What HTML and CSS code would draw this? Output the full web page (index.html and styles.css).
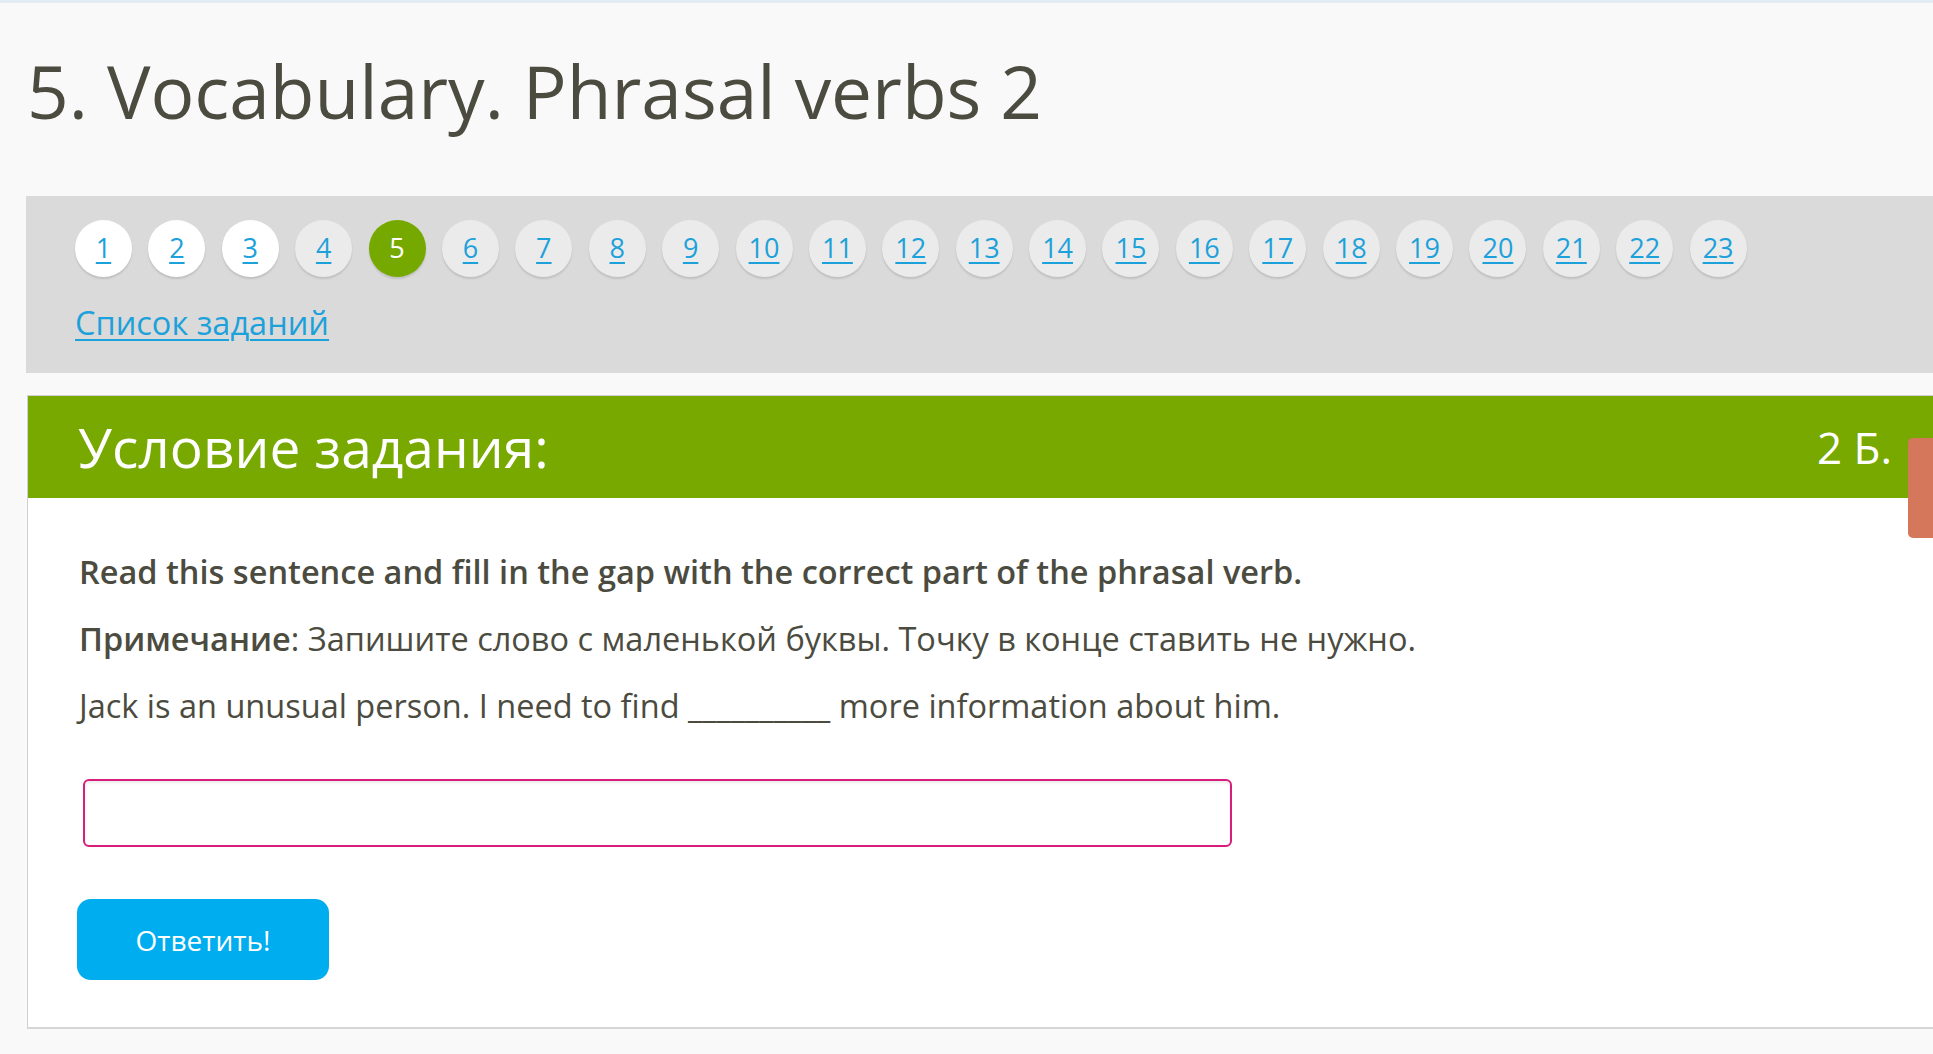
FILE: index.html
```html
<!DOCTYPE html>
<html lang="ru">
<head>
    <meta charset="UTF-8">
    <meta name="viewport" content="width=device-width, initial-scale=1.0">
    <title>5. Vocabulary. Phrasal verbs 2</title>
    <link rel="stylesheet" href="styles.css">
</head>
<body>
    <div class="page">
        <h1>5. Vocabulary. Phrasal verbs 2</h1>

        <div class="task-nav">
            <div class="steps">
                <a class="step done" href="#">1</a>
                <a class="step done" href="#">2</a>
                <a class="step done" href="#">3</a>
                <a class="step" href="#">4</a>
                <span class="step current">5</span>
                <a class="step" href="#">6</a>
                <a class="step" href="#">7</a>
                <a class="step" href="#">8</a>
                <a class="step" href="#">9</a>
                <a class="step" href="#">10</a>
                <a class="step" href="#">11</a>
                <a class="step" href="#">12</a>
                <a class="step" href="#">13</a>
                <a class="step" href="#">14</a>
                <a class="step" href="#">15</a>
                <a class="step" href="#">16</a>
                <a class="step" href="#">17</a>
                <a class="step" href="#">18</a>
                <a class="step" href="#">19</a>
                <a class="step" href="#">20</a>
                <a class="step" href="#">21</a>
                <a class="step" href="#">22</a>
                <a class="step" href="#">23</a>
            </div>
            <a class="task-list" href="#">Список заданий</a>
        </div>

        <div class="task">
            <div class="task-head">
                <span class="task-title">Условие задания:</span>
                <span class="task-score">2 Б.</span>
            </div>
            <div class="task-body">
                <p class="lead">Read this sentence and fill in the gap with the correct part of the phrasal verb.</p>
                <p><b>Примечание</b>: Запишите слово с маленькой буквы. Точку в конце ставить не нужно.</p>
                <p>Jack is an unusual person. I need to find __________ more information about him.</p>

                <input class="answer" type="text">

                <button class="submit">Ответить!</button>
            </div>
        </div>
    </div>

    <div class="feedback-tab"></div>
</body>
</html>
```

FILE: styles.css
```css
body {
    margin: 0;
    background: #f9f9f9;
    border-top: 3px solid #e3ebf3;
    font-family: "Open Sans", "Noto Sans", sans-serif;
    color: #4b4b40;
    overflow: hidden;
}
.page {
    padding-left: 26px;
}
h1 {
    margin: 44px 0 61px 1px;
    font-size: 73px;
    font-weight: 400;
    line-height: 88px;
    color: #4b4b40;
}

/* task navigation */
.task-nav {
    background: #dadada;
    padding: 24px 0 32px 49px;
}
.steps {
    display: flex;
    gap: 16.4px;
}
.step {
    width: 57px;
    height: 57px;
    border-radius: 50%;
    background: #ebebeb;
    box-shadow: 0 2px 2px rgba(0,0,0,0.12);
    display: flex;
    align-items: center;
    justify-content: center;
    padding-bottom: 2px;
    box-sizing: border-box;
    font-size: 27px;
    color: #1da1da;
    text-decoration: underline;
    text-underline-offset: 4px;
    text-decoration-thickness: 2px;
    flex-shrink: 0;
}
.step.done { background: #fff; }
.step.current {
    background: #76a900;
    color: #fff;
    text-decoration: none;
}
.task-list {
    display: inline-block;
    margin-top: 28px;
    font-size: 32.5px;
    line-height: 36px;
    color: #1da1da;
    text-underline-offset: 4px;
    text-decoration-thickness: 2px;
}

/* task card */
.task {
    margin-top: 22px;
    margin-left: 1px;
    background: #fff;
    border-top: 1px solid #d0d0d0;
    border-left: 1px solid #d0d0d0;
    border-bottom: 2px solid #d6d6d6;
}
.task-head {
    height: 102px;
    background: #77a900;
    color: #fff;
    display: flex;
    align-items: center;
    justify-content: space-between;
    padding: 0 41px 0 50px;
}
.task-title {
    font-size: 55px;
    line-height: 68px;
}
.task-score {
    font-size: 44px;
    line-height: 56px;
}
.task-body {
    padding: 54px 0 47px 49px;
}
.task-body p {
    margin: 0 0 28px 2px;
    font-size: 32.5px;
    line-height: 39px;
}
.task-body b,
.task-body .lead {
    font-weight: 600;
}
.answer {
    display: block;
    box-sizing: border-box;
    width: 1149px;
    height: 68px;
    margin: 54px 0 52px 6px;
    border: 2px solid #d81d7d;
    border-radius: 6px;
    box-shadow: inset 0 2px 3px rgba(0,0,0,0.08);
    background: #fff;
    font: inherit;
    font-size: 28px;
    padding: 0 16px;
}
.submit {
    display: block;
    width: 252px;
    height: 81px;
    border: none;
    border-radius: 14px;
    background: #00aeef;
    color: #fff;
    font-family: "Open Sans", sans-serif;
    font-size: 28px;
    cursor: pointer;
}

.feedback-tab {
    position: fixed;
    right: 0;
    top: 438px;
    width: 25px;
    height: 100px;
    background: #d5775a;
    border-radius: 5px 0 0 5px;
}
```
